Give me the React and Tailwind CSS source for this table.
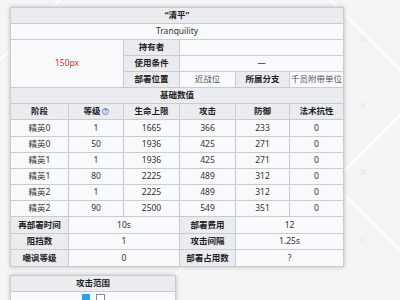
import React from "react";

const H = "bg-[#eaecf0] font-bold text-[#222]";
const D = "bg-[#f8f9fa] text-[#333]";
const cell = "border border-[#c8ccd1] text-center p-0 leading-none";

function Th({ children, className = "", ...rest }) {
  return (
    <td className={`${cell} ${H} ${className}`} {...rest}>
      {children}
    </td>
  );
}
function Td({ children, className = "", ...rest }) {
  return (
    <td className={`${cell} ${D} ${className}`} {...rest}>
      {children}
    </td>
  );
}

const rows = [
  ["精英0", "1", "1665", "366", "233", "0"],
  ["精英0", "50", "1936", "425", "271", "0"],
  ["精英1", "1", "1936", "425", "271", "0"],
  ["精英1", "80", "2225", "489", "312", "0"],
  ["精英2", "1", "2225", "489", "312", "0"],
  ["精英2", "90", "2500", "549", "351", "0"],
];

function Bg() {
  const xs = [39, 106, 172, 240];
  return (
    <svg className="absolute inset-0 pointer-events-none" width="400" height="300">
      <g stroke="#ffffff" strokeWidth="2" opacity="0.9">
        <line x1="0" y1="60" x2="60" y2="0" />
        <line x1="330" y1="0" x2="400" y2="70" />
        <line x1="345" y1="170" x2="400" y2="115" />
        <line x1="345" y1="195" x2="400" y2="250" />
        <line x1="150" y1="300" x2="230" y2="220" />
      </g>
      {xs.map((y) => (
        <g key={y} stroke="#ececec" strokeWidth="2">
          <line x1={360} y1={y - 3} x2={366} y2={y + 3} />
          <line x1={366} y1={y - 3} x2={360} y2={y + 3} />
        </g>
      ))}
    </svg>
  );
}

const R = "h-[16px]";
const R17 = "h-[17px]";

export default function App() {
  return (
    <div
      className="relative w-[400px] h-[300px] overflow-hidden bg-[#f5f5f5] text-[8.5px]"
      style={{ fontFamily: '"Noto Sans", "Noto Sans CJK SC", sans-serif' }}
    >
      <Bg />
      <div className="relative pl-[10px] pt-[7px]">
        <table className="table-fixed border-collapse w-[333px] shadow-[0_0_4px_rgba(0,0,0,0.25)]">
          <colgroup>
            <col className="w-[58px]" />
            <col className="w-[55px]" />
            <col className="w-[56px]" />
            <col className="w-[56px]" />
            <col className="w-[54px]" />
            <col className="w-[54px]" />
          </colgroup>
          <tbody>
            <tr className={R}>
              <Th colSpan={6}>“清平”</Th>
            </tr>
            <tr className={R}>
              <Td colSpan={6}>Tranquility</Td>
            </tr>
            <tr className={R}>
              <Td colSpan={2} rowSpan={3} className="text-[#d33]">150px</Td>
              <Th>持有者</Th>
              <Td colSpan={3}></Td>
            </tr>
            <tr className={R}>
              <Th>使用条件</Th>
              <Td colSpan={3}>—</Td>
            </tr>
            <tr className={R}>
              <Th>部署位置</Th>
              <Td className="text-[#555]">近战位</Td>
              <Th>所属分支</Th>
              <Td className="text-[#555]">千员附带单位</Td>
            </tr>
            <tr className={R}>
              <Th colSpan={6}>基础数值</Th>
            </tr>
            <tr className={R}>
              <Th>阶段</Th>
              <Th>
                <span className="inline-flex items-center">
                  等级
                  <svg width="7" height="7" viewBox="0 0 14 14" className="ml-[1px]">
                    <circle cx="7" cy="7" r="6" fill="none" stroke="#3366cc" strokeWidth="1.5" />
                    <text x="7" y="10.5" textAnchor="middle" fontSize="10" fill="#3366cc" fontWeight="bold">?</text>
                  </svg>
                </span>
              </Th>
              <Th>生命上限</Th>
              <Th>攻击</Th>
              <Th>防御</Th>
              <Th>法术抗性</Th>
            </tr>
            {rows.map((r, i) => (
              <tr key={i} className={i === 0 ? R17 : R}>
                {r.map((c, j) => (
                  <Td key={j}>{c}</Td>
                ))}
              </tr>
            ))}
            <tr className={R17}>
              <Th>再部署时间</Th>
              <Td colSpan={2}>10s</Td>
              <Th>部署费用</Th>
              <Td colSpan={2}>12</Td>
            </tr>
            <tr className={R}>
              <Th>阻挡数</Th>
              <Td colSpan={2}>1</Td>
              <Th>攻击间隔</Th>
              <Td colSpan={2}>1.25s</Td>
            </tr>
            <tr className={R17}>
              <Th>嘲讽等级</Th>
              <Td colSpan={2}>0</Td>
              <Th>部署占用数</Th>
              <Td colSpan={2}>?</Td>
            </tr>
          </tbody>
        </table>
        <table className="mt-[8px] table-fixed border-collapse w-[166px] shadow-[0_0_4px_rgba(0,0,0,0.25)]">
          <tbody>
            <tr className={R}>
              <Th>攻击范围</Th>
            </tr>
            <tr>
              <Td className="pt-[2px] pb-[20px]">
                <div className="flex justify-center items-start gap-[6px]">
                  <div className="w-[8px] h-[8px] bg-[#27a2f0]" />
                  <div className="w-[9px] h-[9px] bg-white border border-[#888]" />
                </div>
              </Td>
            </tr>
          </tbody>
        </table>
      </div>
    </div>
  );
}
